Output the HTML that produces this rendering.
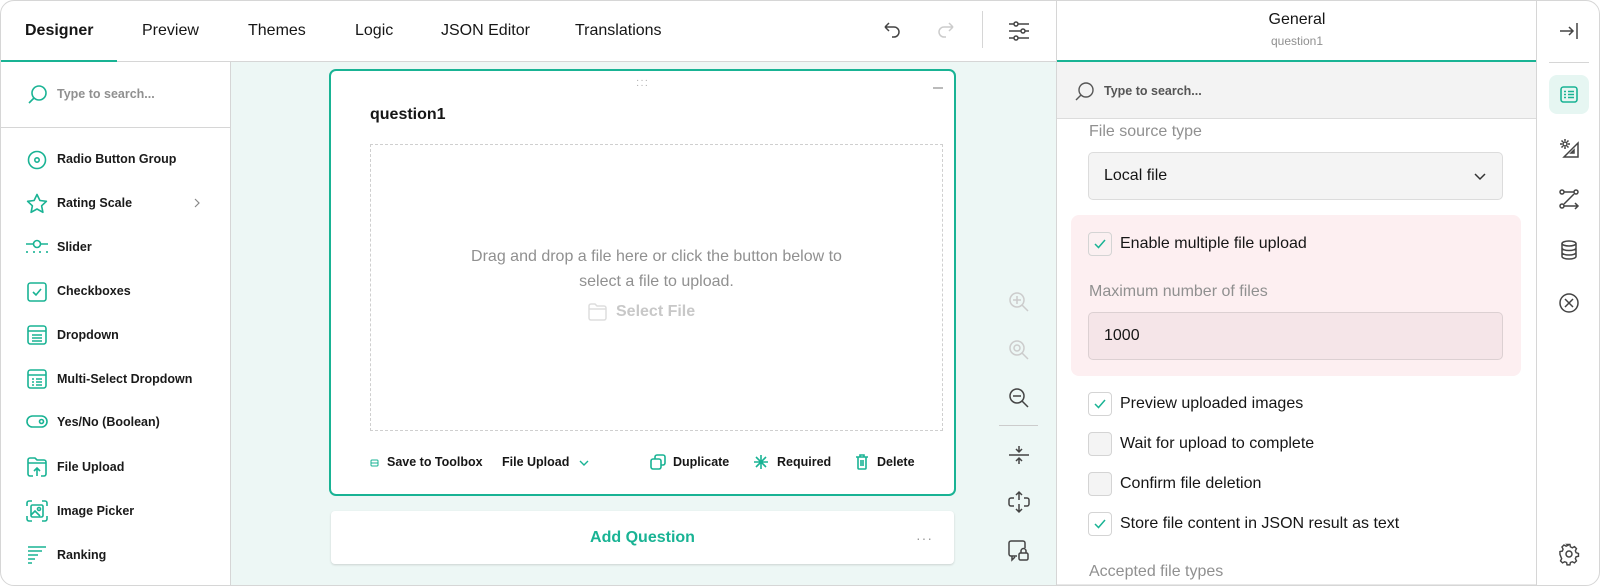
<!DOCTYPE html>
<html><head><meta charset="utf-8"><style>
*{box-sizing:border-box;margin:0;padding:0}
body{width:1600px;height:586px;overflow:hidden;background:#fff;font-family:"Liberation Sans",sans-serif;color:#161616;position:relative}
.a{position:absolute}
.frame{left:0;top:0;width:1600px;height:586px;border:1px solid #d6d6d6;border-radius:14px;overflow:hidden}
.t{position:absolute;white-space:nowrap;line-height:1}
.tab{font-size:16px;top:22px}
.li{font-size:12.5px;font-weight:bold;color:#1a1a1a;left:56px}
svg{position:absolute;overflow:visible}
.g{stroke:#19b394;fill:none;stroke-width:1.6}
.d{stroke:#444;fill:none;stroke-width:1.5}
.cb{position:absolute;left:1087px;width:24px;height:24px;border:1px solid #d4d4d4;border-radius:4px;background:#f4f4f4}
.cbl{font-size:16px;left:1119px}
</style></head><body>
<div class="a frame">
<!-- top bar -->
<div class="a" style="left:0;top:60px;width:1055px;height:1px;background:#d6d6d6"></div>
<div class="a" style="left:0;top:59px;width:116px;height:2px;background:#19b394"></div>
<div class="t tab" style="left:24px;font-weight:bold">Designer</div>
<div class="t tab" style="left:141px">Preview</div>
<div class="t tab" style="left:247px">Themes</div>
<div class="t tab" style="left:354px">Logic</div>
<div class="t tab" style="left:440px">JSON Editor</div>
<div class="t tab" style="left:574px">Translations</div>
<svg style="left:880px;top:20px" width="20" height="20"><path class="d" d="M4 6h9a5 5 0 0 1 0 10h-2M4 6l4-4M4 6l4 4"/></svg>
<svg style="left:936px;top:20px" width="20" height="20"><path d="M16 6H7a5 5 0 0 0 0 10h2M16 6l-4-4M16 6l-4 4" fill="none" stroke="#ccc" stroke-width="1.5"/></svg>
<div class="a" style="left:981px;top:10px;width:1px;height:37px;background:#d6d6d6"></div>
<svg style="left:1007px;top:20px" width="22" height="20"><path class="d" d="M1 3h20M1 10h20M1 17h20"/><circle cx="8" cy="3" r="2" fill="#fff" stroke="#444" stroke-width="1.5"/><circle cx="15" cy="10" r="2" fill="#fff" stroke="#444" stroke-width="1.5"/><circle cx="8" cy="17" r="2" fill="#fff" stroke="#444" stroke-width="1.5"/></svg>

<!-- left toolbox -->
<div class="a" style="left:229px;top:61px;width:1px;height:525px;background:#d6d6d6"></div>
<div class="a" style="left:0;top:126px;width:229px;height:1px;background:#d6d6d6"></div>
<svg style="left:26px;top:83px" width="22" height="22"><circle class="g" cx="12" cy="9" r="7"/><path class="g" d="M7 14l-5 5"/></svg>
<div class="t" style="left:56px;top:87px;font-size:12.5px;color:#909090;font-weight:bold">Type to search...</div>
<svg style="left:26px;top:149px" width="20" height="20"><circle class="g" cx="10" cy="10" r="8.5"/><circle class="g" cx="10" cy="10" r="2.2"/></svg>
<div class="t li" style="top:152px">Radio Button Group</div>
<svg style="left:25px;top:192px" width="22" height="22"><path class="g" d="M11 1.5l2.9 6 6.5.8-4.8 4.5 1.3 6.5L11 16l-5.9 3.3 1.3-6.5L1.6 8.3l6.5-.8z" stroke-linejoin="round"/></svg>
<div class="t li" style="top:196px">Rating Scale</div>
<svg style="left:193px;top:197px" width="8" height="10"><path d="M1 1l4 4-4 4" fill="none" stroke="#888" stroke-width="1.2"/></svg>
<svg style="left:25px;top:238px" width="22" height="16"><path class="g" d="M0 5h7M15 5h7"/><circle class="g" cx="11" cy="5" r="3.5"/><path class="g" d="M1 12v2M8 12v2M14 12v2M21 12v2"/></svg>
<div class="t li" style="top:240px">Slider</div>
<svg style="left:26px;top:281px" width="20" height="20"><rect class="g" x="1" y="1" width="18" height="18" rx="2.5"/><path class="g" d="M6 10l3 3 5-6"/></svg>
<div class="t li" style="top:284px">Checkboxes</div>
<svg style="left:26px;top:324px" width="20" height="20"><rect class="g" x="1" y="1" width="18" height="18" rx="2.5"/><path class="g" d="M1 6h18M5 10h10M5 13h10M5 16h10"/></svg>
<div class="t li" style="top:328px">Dropdown</div>
<svg style="left:26px;top:368px" width="20" height="20"><rect class="g" x="1" y="1" width="18" height="18" rx="2.5"/><path class="g" d="M1 6h18M5 10h2M9 10h6M5 13h2M9 13h6M5 16h2M9 16h6"/></svg>
<div class="t li" style="top:372px">Multi-Select Dropdown</div>
<svg style="left:25px;top:414px" width="22" height="14"><rect class="g" x="1" y="1" width="20" height="11" rx="5.5"/><circle class="g" cx="15.5" cy="6.5" r="2"/></svg>
<div class="t li" style="top:415px">Yes/No (Boolean)</div>
<svg style="left:26px;top:456px" width="20" height="20"><path class="g" d="M1 3a2 2 0 0 1 2-2h5l2 2h7a2 2 0 0 1 2 2v12a2 2 0 0 1-2 2h-3M6 19H3a2 2 0 0 1-2-2V3M1 6h18M10 19v-8M7 14l3-3 3 3"/></svg>
<div class="t li" style="top:460px">File Upload</div>
<svg style="left:25px;top:499px" width="22" height="22"><path class="g" d="M1 6V3a2 2 0 0 1 2-2h3M16 1h3a2 2 0 0 1 2 2v3M21 16v3a2 2 0 0 1-2 2h-3M6 21H3a2 2 0 0 1-2-2v-3"/><rect class="g" x="5" y="5" width="12" height="12" rx="1.5"/><circle class="g" cx="13" cy="9" r="1.5"/><path class="g" d="M5 15l4-4 5 5"/></svg>
<div class="t li" style="top:504px">Image Picker</div>
<svg style="left:26px;top:544px" width="20" height="20"><path class="g" d="M1 2h18M1 6h14M1 10h10M1 14h7M1 18h4"/></svg>
<div class="t li" style="top:548px">Ranking</div>

<!-- canvas -->
<div class="a" style="left:230px;top:61px;width:825px;height:525px;background:#edf7f5"></div>
<div class="a" style="left:328px;top:68px;width:627px;height:427px;border:2px solid #19b394;border-radius:7px;background:#fff"></div>
<div class="t" style="left:635px;top:77px;font-size:10px;color:#aaa;letter-spacing:1px;line-height:5px">···<br>···</div>
<div class="a" style="left:932px;top:86px;width:10px;height:1.5px;background:#bbb"></div>
<div class="t" style="left:369px;top:106px;font-size:16px;font-weight:bold">question1</div>
<div class="a" style="left:369px;top:143px;width:573px;height:287px;border:1px dashed #cfcfcf"></div>
<div class="t" style="left:369px;width:573px;top:243px;text-align:center;font-size:16px;color:#909090;line-height:25px;white-space:normal">Drag and drop a file here or click the button below to<br>select a file to upload.</div>
<svg style="left:587px;top:302px" width="20" height="18"><path d="M1 3a2 2 0 0 1 2-2h4l2 2h7a2 2 0 0 1 2 2v10a2 2 0 0 1-2 2H3a2 2 0 0 1-2-2zM1 6h17" fill="none" stroke="#ddd" stroke-width="1.5"/></svg>
<div class="t" style="left:615px;top:303px;font-size:16px;color:#c8c8c8;font-weight:bold">Select File</div>
<svg style="left:369px;top:457px" width="9" height="9"><rect x="1" y="2" width="7" height="6" rx="1" fill="none" stroke="#19b394" stroke-width="1"/><path d="M1 5h7" stroke="#19b394"/></svg>
<div class="t" style="left:386px;top:455px;font-size:12.5px;font-weight:bold">Save to Toolbox</div>
<div class="t" style="left:501px;top:455px;font-size:12.5px;font-weight:bold">File Upload</div>
<svg style="left:578px;top:459px" width="10" height="6"><path d="M1 1l4 4 4-4" fill="none" stroke="#19b394" stroke-width="1.4"/></svg>
<svg style="left:649px;top:453px" width="16" height="16"><rect class="g" x="1" y="5" width="10" height="10" rx="2"/><path class="g" d="M5 5V3a2 2 0 0 1 2-2h6a2 2 0 0 1 2 2v6a2 2 0 0 1-2 2h-2"/></svg>
<div class="t" style="left:672px;top:455px;font-size:12.5px;font-weight:bold">Duplicate</div>
<svg style="left:753px;top:454px" width="14" height="14"><path class="g" d="M7 0v14M0 7h14M2 2l10 10M12 2L2 12"/></svg>
<div class="t" style="left:776px;top:455px;font-size:12.5px;font-weight:bold">Required</div>
<svg style="left:855px;top:453px" width="12" height="16"><path class="g" d="M0 3h12M4 3V1h4v2M2 3v11a1 1 0 0 0 1 1h6a1 1 0 0 0 1-1V3M5 6v6M7 6v6"/></svg>
<div class="t" style="left:876px;top:455px;font-size:12.5px;font-weight:bold">Delete</div>
<div class="a" style="left:330px;top:510px;width:623px;height:53px;background:#fff;border-radius:4px;box-shadow:0 1px 2px rgba(0,0,0,.15)"></div>
<div class="t" style="left:330px;width:623px;text-align:center;top:529px;font-size:16px;font-weight:bold;color:#19b394">Add Question</div>
<div class="t" style="left:915px;top:530px;font-size:14px;color:#999;letter-spacing:1px">···</div>
<!-- zoom tools -->
<svg style="left:1007px;top:290px" width="22" height="22"><circle cx="9" cy="9" r="7" fill="none" stroke="#ccc" stroke-width="1.5"/><path d="M14 14l6 6M9 5v8M5 9h8" stroke="#ccc" stroke-width="1.5"/></svg>
<svg style="left:1007px;top:338px" width="22" height="22"><circle cx="9" cy="9" r="7" fill="none" stroke="#ccc" stroke-width="1.5"/><circle cx="9" cy="9" r="3" fill="none" stroke="#ccc" stroke-width="1.5"/><path d="M14 14l6 6" stroke="#ccc" stroke-width="1.5"/></svg>
<svg style="left:1007px;top:386px" width="22" height="22"><circle class="d" cx="9" cy="9" r="7"/><path class="d" d="M14 14l6 6M5 9h8"/></svg>
<div class="a" style="left:998px;top:424px;width:39px;height:1px;background:#ccc"></div>
<svg style="left:1008px;top:444px" width="20" height="20"><path class="d" d="M0 10h20M10 1v6M7 4l3 3 3-3M10 19v-6M7 16l3-3 3 3"/></svg>
<svg style="left:1007px;top:490px" width="22" height="22"><path class="d" d="M6 7H3a2 2 0 0 0-2 2v4a2 2 0 0 0 2 2h3M16 7h3a2 2 0 0 1 2 2v4a2 2 0 0 1-2 2h-3M11 1v8M8 4l3-3 3 3M11 21v-8M8 18l3 3 3-3"/></svg>
<svg style="left:1007px;top:539px" width="22" height="22"><path class="d" d="M9 16H3a2 2 0 0 1-2-2V3a2 2 0 0 1 2-2h12a2 2 0 0 1 2 2v5M4 16v4l3-3"/><rect class="d" x="11" y="13" width="9" height="7" rx="1.5"/><path class="d" d="M13 13v-2a2.5 2.5 0 0 1 5 0v2"/></svg>

<!-- right panel -->
<div class="a" style="left:1055px;top:0;width:1px;height:586px;background:#d6d6d6"></div>
<div class="t" style="left:1056px;width:480px;text-align:center;top:11px;font-size:16px">General</div>
<div class="t" style="left:1056px;width:480px;text-align:center;top:34px;font-size:12px;color:#909090">question1</div>
<div class="a" style="left:1056px;top:59px;width:480px;height:2px;background:#19b394"></div>
<div class="a" style="left:1056px;top:61px;width:480px;height:57px;background:#f3f3f3;border-bottom:1px solid #dcdcdc"></div>
<svg style="left:1073px;top:80px" width="22" height="22"><circle cx="12" cy="9" r="7" fill="none" stroke="#555" stroke-width="1.4"/><path d="M7 14l-5 5" stroke="#555" stroke-width="1.4"/></svg>
<div class="t" style="left:1103px;top:84px;font-size:12.5px;color:#555;font-weight:bold">Type to search...</div>
<div class="t" style="left:1088px;top:123px;font-size:16px;color:#909090">File source type</div>
<div class="a" style="left:1087px;top:151px;width:415px;height:48px;background:#f4f4f4;border:1px solid #dcdcdc;border-radius:5px"></div>
<div class="t" style="left:1103px;top:167px;font-size:16px">Local file</div>
<svg style="left:1473px;top:172px" width="12" height="8"><path d="M1 1l5 5 5-5" fill="none" stroke="#333" stroke-width="1.5"/></svg>
<div class="a" style="left:1070px;top:214px;width:450px;height:161px;background:#fdeff1;border-radius:8px"></div>
<div class="cb" style="top:231px;background:#fbf0f1"></div>
<svg style="left:1093px;top:238px" width="12" height="10"><path d="M1 5l3.5 3.5L11 1" fill="none" stroke="#19b394" stroke-width="1.5"/></svg>
<div class="t cbl" style="top:235px">Enable multiple file upload</div>
<div class="t" style="left:1088px;top:283px;font-size:16px;color:#909090">Maximum number of files</div>
<div class="a" style="left:1087px;top:311px;width:415px;height:48px;background:#f5e5e8;border:1px solid #dcd0d2;border-radius:5px"></div>
<div class="t" style="left:1103px;top:327px;font-size:16px">1000</div>
<div class="cb" style="top:391px;background:#fff"></div>
<svg style="left:1093px;top:398px" width="12" height="10"><path d="M1 5l3.5 3.5L11 1" fill="none" stroke="#19b394" stroke-width="1.5"/></svg>
<div class="t cbl" style="top:395px">Preview uploaded images</div>
<div class="cb" style="top:431px"></div>
<div class="t cbl" style="top:435px">Wait for upload to complete</div>
<div class="cb" style="top:471px"></div>
<div class="t cbl" style="top:475px">Confirm file deletion</div>
<div class="cb" style="top:511px;background:#fff"></div>
<svg style="left:1093px;top:518px" width="12" height="10"><path d="M1 5l3.5 3.5L11 1" fill="none" stroke="#19b394" stroke-width="1.5"/></svg>
<div class="t cbl" style="top:515px">Store file content in JSON result as text</div>
<div class="t" style="left:1088px;top:563px;font-size:16px;color:#909090">Accepted file types</div>
<div class="a" style="left:1056px;top:583px;width:480px;height:3px;background:#e8e8e8"></div>

<!-- sidebar -->
<div class="a" style="left:1535px;top:0;width:1px;height:586px;background:#d6d6d6"></div>
<svg style="left:1558px;top:21px" width="20" height="18"><path class="d" d="M1 9h13M10 5l4 4-4 4M18 1v16" stroke="#555"/></svg>
<div class="a" style="left:1548px;top:61px;width:40px;height:1px;background:#d6d6d6"></div>
<div class="a" style="left:1548px;top:74px;width:40px;height:39px;background:#e6f6f2;border-radius:8px"></div>
<svg style="left:1559px;top:85px" width="18" height="17"><rect class="g" x="1" y="1" width="16" height="15" rx="2.5"/><path class="g" d="M4 5.5h2M8 5.5h6M4 8.5h2M8 8.5h6M4 11.5h2M8 11.5h6"/></svg>
<svg style="left:1558px;top:137px" width="20" height="20"><circle class="d" cx="6" cy="6" r="2"/><path class="d" d="M6 1v2M6 9v2M1 6h2M9 6h2M2.5 2.5l1.4 1.4M8.1 8.1l1.4 1.4M2.5 9.5l1.4-1.4M8.1 3.9l1.4-1.4M19 5v14H5zM15 15h-3l3-3z"/></svg>
<svg style="left:1558px;top:188px" width="20" height="20"><circle class="d" cx="3" cy="3" r="2"/><circle class="d" cx="17" cy="3" r="2"/><circle class="d" cx="3" cy="17" r="2"/><path class="d" d="M5 3h10M15 5L5 15M5 17h14M16 14l3 3-3 3"/></svg>
<svg style="left:1560px;top:239px" width="16" height="20"><ellipse class="d" cx="8" cy="3.5" rx="7" ry="2.5"/><path class="d" d="M1 3.5v13c0 1.4 3.1 2.5 7 2.5s7-1.1 7-2.5v-13M1 8c0 1.4 3.1 2.5 7 2.5s7-1.1 7-2.5M1 12.5c0 1.4 3.1 2.5 7 2.5s7-1.1 7-2.5"/></svg>
<svg style="left:1558px;top:292px" width="20" height="20"><circle class="d" cx="10" cy="10" r="9"/><path class="d" d="M6 6l8 8M14 6l-8 8"/></svg>
<svg style="left:1558px;top:543px" width="20" height="20"><circle class="d" cx="10" cy="10" r="3"/><path class="d" d="M8.5 1h3l.5 2.5 2 1 2.3-1.2 2.1 2.1-1.2 2.3.8 2 2.5.8v3l-2.5.5-.8 2 1.2 2.3-2.1 2.1-2.3-1.2-2 .8-.5 2.5h-3l-.5-2.5-2-.8-2.3 1.2-2.1-2.1 1.2-2.3-.8-2L1 11.5v-3l2.5-.5.8-2-1.2-2.3 2.1-2.1 2.3 1.2 2-1z" transform="translate(0 -.5) scale(.95)"/></svg>
</div>
</body></html>
